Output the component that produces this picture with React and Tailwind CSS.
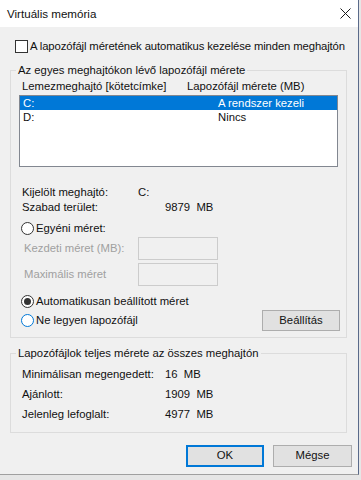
import { useState } from 'react';

const font = { fontFamily: '"Liberation Sans", Arial, sans-serif' };

const Radio = ({ checked, focused, label, onClick }) => (
    <div className="flex items-center cursor-default" onClick={onClick}>
        <span className={`w-[13px] h-[13px] shrink-0 rounded-full border bg-white flex items-center justify-center ${focused ? 'border-[#0078d7]' : 'border-[#333333]'}`}>
            {checked && <span className="w-[7px] h-[7px] rounded-full bg-[#333333]" />}
        </span>
        <span className="ml-[2px] whitespace-nowrap">{label}</span>
    </div>
);

const App = () => {
    const [auto, setAuto] = useState(false);
    const [mode, setMode] = useState('auto');
    const [selected, setSelected] = useState('C:');

    const drives = [
        { name: 'C:', size: 'A rendszer kezeli' },
        { name: 'D:', size: 'Nincs' },
    ];

    return (
        <div className="w-[361px] h-[480px] bg-[#e6e6e6] overflow-hidden text-[11.3px] text-[#111111]" style={font}>
            <div className="w-[359px] h-[475px] flex flex-col bg-[#f0f0f0] border-r border-b border-r-[#5a6a8a] border-b-[#a0a0a0]">
                {/* title bar */}
                <div className="h-[27px] bg-white flex items-center justify-between pl-[7px] pr-[7px] shrink-0">
                    <span className="leading-none text-[11.6px]">Virtuális memória</span>
                    <svg width="11" height="11" viewBox="0 0 11 11">
                        <path d="M0.5 0.5 L10.5 10.5 M10.5 0.5 L0.5 10.5" stroke="#1a1a1a" strokeWidth="1" />
                    </svg>
                </div>

                <div className="flex flex-col pl-[10px] pr-[11px]">
                    {/* auto manage checkbox */}
                    <div className="flex items-center mt-[13px] pl-[5px] h-[13px]" onClick={() => setAuto(!auto)}>
                        <span className="w-[13px] h-[13px] border border-[#333333] bg-white shrink-0 flex items-center justify-center">
                            {auto && <span className="text-[10px] leading-none">✓</span>}
                        </span>
                        <span className="ml-[2px] whitespace-nowrap tracking-[-0.12px]">A lapozófájl méretének automatikus kezelése minden meghajtón</span>
                    </div>

                    {/* drives group */}
                    <fieldset className="mt-[10px] border border-[#dcdcdc] px-[8px] pb-[6px]">
                        <legend className="ml-[-3px] px-[2px] leading-[14px] whitespace-nowrap">Az egyes meghajtókon lévő lapozófájl mérete</legend>

                        <div className="flex leading-[16px] mt-[1px] pl-[3px] whitespace-nowrap">
                            <span className="w-[165px]">Lemezmeghajtó [kötetcímke]</span>
                            <span>Lapozófájl mérete (MB)</span>
                        </div>

                        <div className="mt-[1px] h-[72px] border border-[#828790] bg-white">
                            {drives.map((d) => (
                                <div
                                    key={d.name}
                                    onClick={() => setSelected(d.name)}
                                    className={`flex h-[14px] items-center leading-[14px] pl-[3px] ${selected === d.name ? 'bg-[#0078d7] text-white' : ''}`}
                                >
                                    <span className="w-[195px]">{d.name}</span>
                                    <span>{d.size}</span>
                                </div>
                            ))}
                        </div>

                        <div className="mt-[18px] pl-[3px] leading-[15px]">
                            <div className="flex">
                                <span className="w-[116px]">Kijelölt meghajtó:</span>
                                <span>{selected}</span>
                            </div>
                            <div className="flex">
                                <span className="w-[143px]">Szabad terület:</span>
                                <span>9879&nbsp;&nbsp;MB</span>
                            </div>
                        </div>

                        <div className="mt-[5px] pl-[2px] h-[16px] flex items-center">
                            <Radio checked={mode === 'custom'} label="Egyéni méret:" onClick={() => setMode('custom')} />
                        </div>

                        <div className="mt-[1px] flex items-center h-[23px] text-[#a0a0a0]">
                            <span className="w-[119px] pl-[5px] whitespace-nowrap">Kezdeti méret (MB):</span>
                            <div className="w-[80px] h-[23px] border border-[#cccccc] bg-[#f0f0f0]" />
                        </div>
                        <div className="mt-[3px] flex items-center h-[23px] text-[#a0a0a0]">
                            <span className="w-[119px] pl-[5px] whitespace-nowrap">Maximális méret</span>
                            <div className="w-[80px] h-[23px] border border-[#cccccc] bg-[#f0f0f0]" />
                        </div>

                        <div className="mt-[7px] pl-[2px] h-[16px] flex items-center">
                            <Radio checked={mode === 'auto'} label="Automatikusan beállított méret" onClick={() => setMode('auto')} />
                        </div>

                        <div className="mt-[1px] pl-[2px] h-[21px] flex items-center justify-between">
                            <Radio checked={mode === 'none'} focused label="Ne legyen lapozófájl" onClick={() => setMode('none')} />
                            <button className="w-[78px] h-[21px] mr-[-2px] bg-[#e1e1e1] border border-[#adadad] leading-none">Beállítás</button>
                        </div>
                    </fieldset>

                    {/* totals group */}
                    <fieldset className="mt-[8px] border border-[#dcdcdc] px-[11px] pb-[8px]">
                        <legend className="ml-[-6px] px-[2px] leading-[14px] whitespace-nowrap">Lapozófájlok teljes mérete az összes meghajtón</legend>
                        <div className="mt-[4px]">
                            {[
                                ['Minimálisan megengedett:', '16'],
                                ['Ajánlott:', '1909'],
                                ['Jelenleg lefoglalt:', '4977'],
                            ].map(([label, value]) => (
                                <div key={label} className="flex h-[20px] items-center whitespace-nowrap">
                                    <span className="w-[143px]">{label}</span>
                                    <span>{value}&nbsp;&nbsp;MB</span>
                                </div>
                            ))}
                        </div>
                    </fieldset>
                </div>

                {/* dialog buttons */}
                <div className="mt-[12px] flex justify-end gap-[9px] pr-[6px]">
                    <button className="w-[78px] h-[22px] bg-[#e1e1e1] border-2 border-[#0078d7] leading-none">OK</button>
                    <button className="w-[79px] h-[22px] bg-[#e1e1e1] border border-[#adadad] leading-none">Mégse</button>
                </div>
            </div>
        </div>
    );
};

export default App;
